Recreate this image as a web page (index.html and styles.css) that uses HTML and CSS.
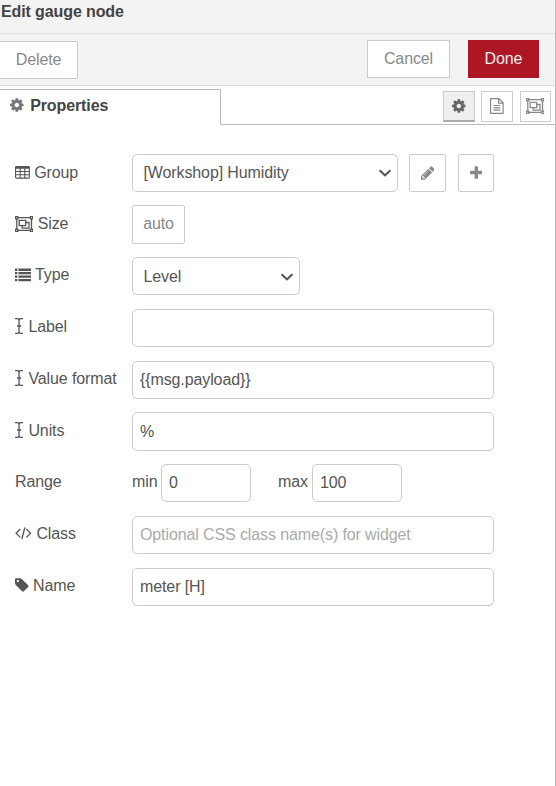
FILE: index.html
```html
<!DOCTYPE html>
<html lang="en">
<head>
<meta charset="utf-8">
<title>Edit gauge node</title>
<link rel="stylesheet" href="styles.css">
</head>
<body>
<svg class="defs" aria-hidden="true">
  <symbol id="cog" viewBox="128 0 1536 1792"><path d="M1152 896q0-106-75-181t-181-75-181 75-75 181 75 181 181 75 181-75 75-181zm512-109v222q0 12-8 23t-20 13l-185 28q-19 54-39 91 35 50 107 138 10 12 10 25t-9 23q-27 37-99 108t-94 71q-12 0-26-9l-138-108q-44 23-91 38-16 136-29 186-7 28-36 28h-222q-14 0-24.5-8.5t-11.5-21.5l-28-184q-49-16-90-37l-141 107q-10 9-25 9-14 0-25-11-126-114-165-168-7-10-7-23 0-12 8-23 15-21 51-66.500t54-70.500q-27-50-41-99l-183-27q-13-2-21-12.500t-8-23.500v-222q0-12 8-23t19-13l186-28q14-46 39-92-40-57-107-138-10-12-10-24 0-10 9-23 26-36 98.500-107.500t94.500-71.500q13 0 26 10l138 107q44-23 91-38 16-136 29-186 7-28 36-28h222q14 0 24.500 8.500t11.500 21.500l28 184q49 16 90 37l142-107q9-9 24-9 13 0 25 10 129 119 165 170 7 8 7 22 0 12-8 23-15 21-51 66.500t-54 70.500q26 50 41 98l183 28q13 2 21 12.500t8 23.500z"/></symbol>
  <symbol id="cursor" viewBox="0 0 9 16"><path d="M0 .7H2Q4 .7 4 2.300V13.700Q4 15.300 2 15.300H0M8 .7H6Q4 .7 4 2.300M4 13.700Q4 15.300 6 15.300H8M2 8H6" fill="none" stroke="currentColor" stroke-width="1.300"/></symbol>
  <symbol id="group" viewBox="0 0 18.300 16"><path d="M2.500 1.700H15.500M2.500 14.300H15.500M1.800 2.500V13.500M16.500 2.500V13.500M4.200 4.300H10.700V9.700H4.200ZM10.700 6.500H14V12.200H7.200V9.700" fill="none" stroke="currentColor" stroke-width="1.300"/><path fill-rule="evenodd" d="M0 0H3.500V3.500H0ZM1.200 1.200V2.300H2.300V1.200ZM14.800 0H18.300V3.500H14.800ZM16 1.200V2.300H17.100V1.200ZM0 12.500H3.500V16H0ZM1.200 13.700V14.800H2.300V13.700ZM14.800 12.500H18.300V16H14.800ZM16 13.700V14.800H17.100V13.700Z"/></symbol>
</svg>
<div class="editor">
  <header class="title">Edit gauge node</header>
  <div class="toolbar">
    <button class="btn delete">Delete</button>
    <button class="btn cancel">Cancel</button>
    <button class="btn done">Done</button>
  </div>
  <nav class="tabs">
    <div class="tab"><svg class="icon w-cog"><use href="#cog"/></svg><span>Properties</span></div>
    <div class="tab-tools">
      <button class="tool active"><svg class="icon w-cog"><use href="#cog"/></svg></button>
      <button class="tool"><svg class="icon w-file" viewBox="0 0 14 16"><path d="M.6.6H8.900L13.100 4.800V15.400H.6ZM8.600.6V5.100H13.100M3.400 7.500H10.300M3.400 9.800H10.300M3.400 12.100H10.300" fill="none" stroke="currentColor" stroke-width="1.200"/></svg></button>
      <button class="tool"><svg class="icon w-group"><use href="#group"/></svg></button>
    </div>
  </nav>
  <form class="form">
    <div class="row first">
      <label><svg class="icon w-table" viewBox="0 0 15 16"><path fill-rule="evenodd" d="M1.300 2H13.700Q15 2 15 3.300V13.400Q15 14.700 13.700 14.700H1.300Q0 14.700 0 13.400V3.300Q0 2 1.300 2ZM1.100 4.700V7H4.700V4.700ZM5.800 4.700V7H9.300V4.700ZM10.400 4.700V7H13.900V4.700ZM1.100 8V10.200H4.700V8ZM5.800 8V10.200H9.300V8ZM10.400 8V10.200H13.900V8ZM1.100 11.300V13.600H4.700V11.300ZM5.800 11.300V13.600H9.300V11.300ZM10.400 11.300V13.600H13.900V11.300Z"/></svg> Group</label>
      <div class="select wide"><select><option>[Workshop] Humidity</option></select><svg class="chevron" viewBox="0 0 14 8"><path d="M1.500 1.200L7 6.300L12.500 1.200"/></svg></div>
      <button type="button" class="btn edit"><svg class="icon w-cog" viewBox="128 0 1536 1792"><path d="M491 1536l91-91-235-235-91 91v107h128v128h107zm523-928q0-22-22-22-10 0-17 7l-542 542q-7 7-7 17 0 22 22 22 10 0 17-7l542-542q7-7 7-17zm-54-192l416 416-832 832h-416v-416zm683 96q0 53-37 90l-166 166-416-416 166-165q36-38 90-38 53 0 91 38l235 234q37 39 37 91z"/></svg></button>
      <button type="button" class="btn add"><svg class="icon w-plus" viewBox="192 0 1408 1792"><path d="M1600 736v192q0 40-28 68t-68 28h-416v416q0 40-28 68t-68 28h-192q-40 0-68-28t-28-68v-416h-416q-40 0-68-28t-28-68v-192q0-40 28-68t68-28h416v-416q0-40 28-68t68-28h192q40 0 68 28t28 68v416h416q40 0 68 28t28 68z"/></svg></button>
    </div>
    <div class="row first">
      <label><svg class="icon w-group"><use href="#group"/></svg> Size</label>
      <button type="button" class="btn auto">auto</button>
    </div>
    <div class="row">
      <label><svg class="icon w-list" viewBox="0 0 16 16"><path d="M0 1.600H2.300V3.900H0ZM3.400 1.600H16V3.900H3.400ZM0 5.100H2.300V7.300H0ZM3.400 5.100H16V7.300H3.400ZM0 8.500H2.300V10.700H0ZM3.400 8.500H16V10.700H3.400ZM0 11.900H2.300V14.200H0ZM3.400 11.900H16V14.200H3.400Z"/></svg> Type</label>
      <div class="select narrow"><select><option>Level</option></select><svg class="chevron" viewBox="0 0 14 8"><path d="M1.500 1.200L7 6.300L12.500 1.200"/></svg></div>
    </div>
    <div class="row">
      <label><svg class="icon w-cursor"><use href="#cursor"/></svg> Label</label>
      <input class="full" type="text">
    </div>
    <div class="row">
      <label><svg class="icon w-cursor"><use href="#cursor"/></svg> Value format</label>
      <input class="full" type="text" value="{{msg.payload}}">
    </div>
    <div class="row">
      <label><svg class="icon w-cursor"><use href="#cursor"/></svg> Units</label>
      <input class="full" type="text" value="%">
    </div>
    <div class="row">
      <label>Range</label>
      <span class="bound min">min</span><input class="num" type="text" value="0">
      <span class="bound max">max</span><input class="num" type="text" value="100">
    </div>
    <div class="row">
      <label><svg class="icon w-code" viewBox="0 0 17 16"><path d="M5.200 4L1.100 8.200L5.200 12.400M11.400 4L15.500 8.200L11.400 12.400M9.800 2.500L6.800 14" fill="none" stroke="currentColor" stroke-width="1.300"/></svg> Class</label>
      <input class="full" type="text" placeholder="Optional CSS class name(s) for widget">
    </div>
    <div class="row">
      <label><svg class="icon w-cog" viewBox="128 0 1536 1792"><path d="M576 448q0-53-37.500-90.500t-90.500-37.500-90.500 37.500-37.500 90.500 37.500 90.500 90.500 37.500 90.500-37.500 37.500-90.500zm1067 576q0 53-37 90l-491 492q-39 37-91 37-53 0-90-37l-715-716q-38-37-64.500-101t-26.500-117v-416q0-52 38-90t90-38h416q53 0 117 26.500t102 64.500l715 714q37 39 37 91z"/></svg> Name</label>
      <input class="full" type="text" value="meter [H]">
    </div>
  </form>
</div>
</body>
</html>
```
FILE: styles.css
```css
* { box-sizing: border-box; }
body {
  margin: 0;
  background: #fff;
  color: #555;
  font: 16px/20px "Liberation Sans", Arial, sans-serif;
  letter-spacing: -0.11px;
}
button, input, select { font: inherit; letter-spacing: inherit; color: inherit; margin: 0; }
.defs { display: none; }
.editor {
  width: 556px;
  height: 786px;
  border-right: 1px solid #bbb;
  overflow: hidden;
}
.title {
  height: 34px;
  padding: 2px 1px;
  background: #f3f3f3;
  border-bottom: 1px solid #ddd;
  color: #444;
  font-weight: bold;
}
.toolbar {
  display: flex;
  height: 52px;
  padding: 6px 16px 0 0;
  background: #f3f3f3;
  border-bottom: 1px solid #ddd;
}
.btn {
  height: 38px;
  padding: 0;
  border: 1px solid #ccc;
  background: #fff;
  color: #888;
}
.delete { width: 79px; margin: 1px auto 0 -1px; }
.cancel { width: 83px; margin-right: 18px; }
.done { width: 71px; background: #ad1625; border-color: #ad1625; color: #eee; }

.tabs {
  display: flex;
  justify-content: space-between;
  height: 39px;
  padding-top: 3px;
  background: linear-gradient(#bbb, #bbb) bottom / 100% 1px no-repeat;
}
.tab {
  display: flex;
  gap: 6.5px;
  width: 221px;
  padding: 6px 10px 0;
  border: solid #bbb;
  border-width: 1px 1px 0 0;
  background: #fff;
  color: #444;
  font-weight: bold;
}
.tab .icon { color: #777; margin-top: 1px; }
.tab-tools { display: flex; gap: 6px; padding: 2px 4px 0 0; }
.tool {
  display: flex;
  align-items: center;
  justify-content: center;
  width: 32px;
  height: 31px;
  padding: 0;
  border: 1px solid #ccc;
  background: #fff;
  color: #888;
}
.tool:last-child { width: 31px; margin-left: 1px; padding-bottom: 1px; }
.tool:nth-child(2) { padding-bottom: 1px; }
.tool.active { background: #efefef; border-bottom: 2px solid #aaa; color: #666; }

.form { display: grid; gap: 13.48px; padding: 28.55px 0 0 15px; }
.row { display: flex; height: 38.3px; }
.row > label { width: 117px; padding-top: 8.2px; white-space: nowrap; }
.row.first > label { padding-top: 9px; }
.row .btn { height: 100%; border-radius: 2px; }
.row input, .select select {
  height: 100%;
  padding: 0 7px;
  border: 1px solid #ccc;
  border-radius: 5px;
  background: #fff;
  outline: none;
}
.row input::placeholder { color: #aaa; opacity: 1; }
.row input.full { width: 362px; }
.row input.num { width: 90px; }
.bound { padding-top: 8.2px; }
.min { width: 29px; }
.max { width: 34px; margin-left: 27px; }
.select { position: relative; }
.select select { appearance: none; width: 100%; padding: 0 10.5px; }
.narrow select { padding-top: 1.5px; }
.wide { width: 266px; }
.narrow { width: 168px; }
.chevron {
  position: absolute;
  right: 6px;
  top: 15.5px;
  width: 14px;
  height: 8px;
  fill: none;
  stroke: #555;
  stroke-width: 2;
}
.edit { width: 37px; margin-left: 11px; }
.add { width: 36px; margin-left: 12px; }
.row .edit, .row .add { padding-top: 1.5px; }
.auto { width: 53px; }

.icon { height: 16px; fill: currentColor; vertical-align: -2.3px; flex: none; }
.w-cog { width: 13.7px; }
.w-plus { width: 12.6px; }
.w-file { width: 14px; }
.w-group { width: 18.3px; }
.w-table { width: 14.9px; }
.w-list { width: 16px; }
.w-cursor { width: 9.1px; }
.w-code { width: 17.1px; }
```
